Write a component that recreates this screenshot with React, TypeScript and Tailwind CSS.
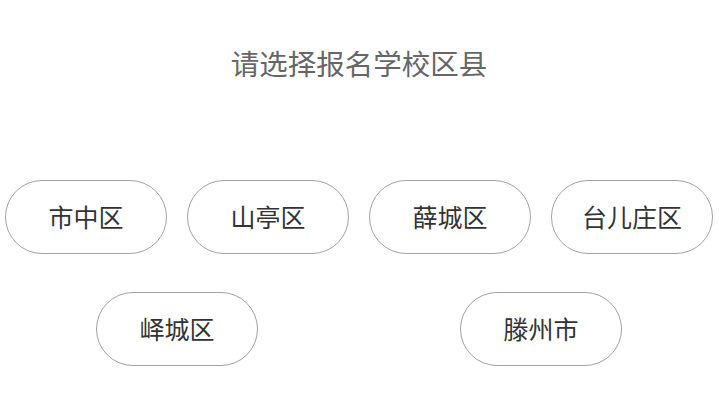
const rowOne = ["市中区", "山亭区", "薛城区", "台儿庄区"];
const rowTwo = ["峄城区", "滕州市"];

function DistrictButton({ name }: { name: string }) {
  return (
    <button className="flex h-[74px] w-[162px] shrink-0 items-center justify-center rounded-full border border-[#a3a3a3] bg-white text-[25px] text-[#333333]">
      {name}
    </button>
  );
}

export default function App() {
  return (
    <main
      className="min-h-[400px] w-full bg-white pt-[42px] pr-[1px]"
      style={{ fontFamily: '"Noto Sans CJK SC", "Noto Sans", sans-serif' }}
    >
      <h1 className="text-center text-[28.5px] leading-[42px] text-[#666666]">
        请选择报名学校区县
      </h1>
      <div className="mt-[96px] flex flex-col gap-[38px]">
        <div className="flex justify-center gap-5">
          {rowOne.map((n) => (
            <DistrictButton key={n} name={n} />
          ))}
        </div>
        <div className="flex justify-center gap-[202px]">
          {rowTwo.map((n) => (
            <DistrictButton key={n} name={n} />
          ))}
        </div>
      </div>
    </main>
  );
}
